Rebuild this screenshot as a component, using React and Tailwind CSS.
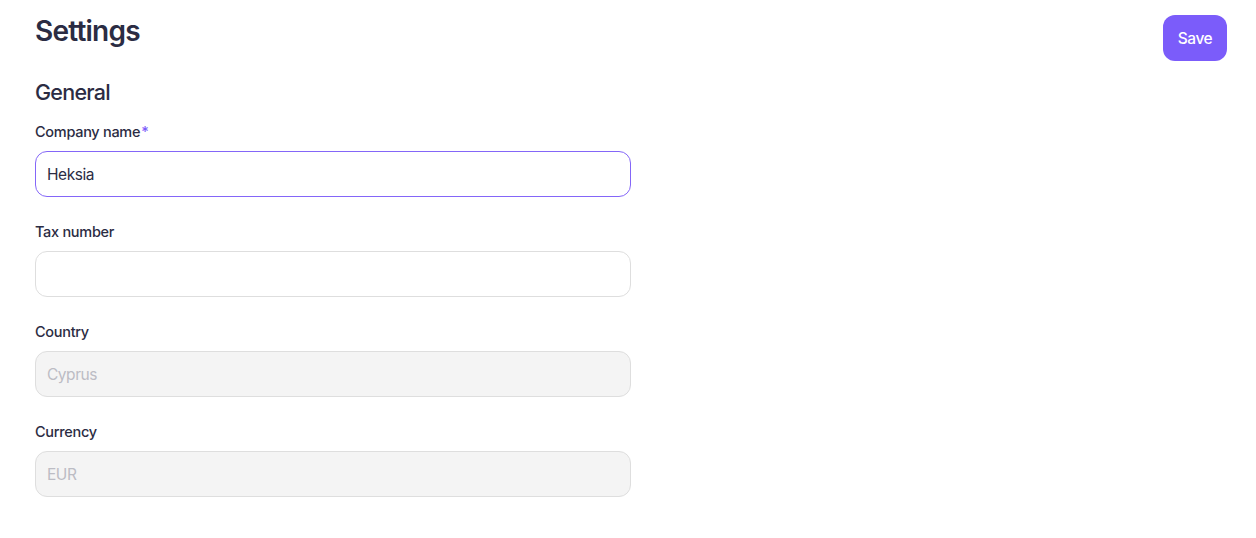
import React, { useState } from "react";

function Field({ label, required, value, onChange, disabled, focused }) {
  return (
    <div className="flex flex-col">
      <label className="text-[14.5px] font-medium leading-[20px] tracking-[-0.02em] text-[#2b2c43]">
        {label}
        {required && <span className="ml-[1px] text-[#7c5cfa]">*</span>}
      </label>
      <input
        type="text"
        value={value}
        onChange={onChange}
        disabled={disabled}
        className={`mt-[9px] h-[46px] w-full rounded-[12px] border px-[11px] text-[15.5px] tracking-[-0.03em] outline-none ${
          disabled
            ? "border-[#dedede] bg-[#f4f4f4] text-[#bcbcc4]"
            : focused
            ? "border-[#8466f8] bg-white text-[#2b2c43]"
            : "border-[#dedede] bg-white text-[#2b2c43]"
        }`}
      />
    </div>
  );
}

export default function App() {
  const [company, setCompany] = useState("Heksia");
  const [tax, setTax] = useState("");

  return (
    <div
      className="min-h-screen bg-white pl-[35px] pr-[29px] pt-[15px]"
      style={{ fontFamily: "Inter, 'Noto Sans', sans-serif" }}
    >
      <div className="flex items-start justify-between">
        <h1 className="text-[28px] font-semibold leading-[32px] tracking-[-0.028em] text-[#2b2c43]">
          Settings
        </h1>
        <button className="h-[46px] w-[64px] rounded-[12px] bg-[#7b5cfa] pt-[2px] text-[15.5px] font-medium tracking-[-0.03em] text-white">
          Save
        </button>
      </div>

      <div className="mt-[17px] w-[596px]">
        <h2 className="text-[21.5px] font-medium leading-[28px] tracking-[-0.035em] text-[#2b2c43]">
          General
        </h2>
        <div className="mt-[16px] flex flex-col gap-[25px]">
          <Field
            label="Company name"
            required
            focused
            value={company}
            onChange={(e) => setCompany(e.target.value)}
          />
          <Field
            label="Tax number"
            value={tax}
            onChange={(e) => setTax(e.target.value)}
          />
          <Field label="Country" value="Cyprus" disabled />
          <Field label="Currency" value="EUR" disabled />
        </div>
      </div>
    </div>
  );
}
